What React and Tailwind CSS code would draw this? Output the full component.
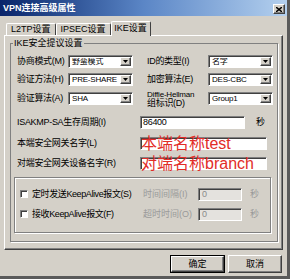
import React from 'react';

const sunken = "bg-white border border-t-[#808080] border-l-[#808080] border-r-white border-b-white shadow-[inset_1px_1px_0_#404040]";
const raised = "bg-[#d4d0c8] border border-t-white border-l-white border-r-[#404040] border-b-[#404040] shadow-[inset_-1px_-1px_0_#808080]";

function Select({ value }) {
  return (
    <div className={`${sunken} w-[65px] h-[13px] flex items-center`}>
      <span className="flex-1 pl-[3px] text-[8px] leading-none text-black whitespace-nowrap overflow-hidden tracking-[-0.2px]">{value}</span>
      <div className={`${raised} w-[11px] h-[9px] mr-[1px] flex items-center justify-center shrink-0`}>
        <svg width="5" height="3" viewBox="0 0 5 3"><path d="M0 0h5L2.5 3z" fill="#000" /></svg>
      </div>
    </div>
  );
}

function Tab({ label, active }) {
  if (active) {
    return (
      <div className="relative z-10 -mb-px h-[15px] w-[40px] bg-[#d4d0c8] border-t border-l border-white border-r border-r-[#404040] rounded-t-[2px] flex items-center justify-center text-[9px] text-black">
        {label}
      </div>
    );
  }
  return (
    <div className="h-[12px] bg-[#d4d0c8] border-t border-l border-white border-r border-r-[#404040] rounded-t-[2px] flex items-center justify-center text-[9px] text-black px-[4px]">
      {label}
    </div>
  );
}

function KeepRow({ label, timeLabel }) {
  return (
    <div className="flex items-center h-[12px]">
      <div className="w-[123px] flex items-center">
        <div className={`${sunken} w-[8px] h-[8px]`} />
        <span className="ml-[4px] text-[9px] leading-none text-black whitespace-nowrap tracking-[-0.4px]">{label}</span>
      </div>
      <span className="w-[55px] text-[9px] leading-none text-[#9a9a9a] whitespace-nowrap">{timeLabel}</span>
      <div className="w-[44px] h-[13px] bg-[#e4e2de] border border-t-[#808080] border-l-[#808080] border-r-white border-b-white shadow-[inset_1px_1px_0_#404040] flex items-center pl-[3px] text-[9px] text-[#8a8a8a] leading-none">0</div>
      <span className="ml-[8px] text-[9px] leading-none text-[#9a9a9a]">秒</span>
    </div>
  );
}

export default function App() {
  return (
    <div className="w-[290px] h-[279px] bg-[#d4d0c8] border-r-[3px] border-b-[3px] border-[#5a5a5a] flex flex-col font-['Liberation_Sans','Noto_Sans_CJK_SC',sans-serif] overflow-hidden">
      {/* title bar */}
      <div className="h-[16px] bg-linear-to-r from-[#0a246a] via-[#5b86c6] to-[#b4d0ee] flex items-center justify-between pl-[3px] pr-[2px]">
        <span className="text-white text-[9px] font-bold leading-none">VPN连接高级属性</span>
        <div className={`${raised} w-[12px] h-[10px] mt-[2px] flex items-center justify-center`}>
          <svg width="6" height="5" viewBox="0 0 6 5"><path d="M0 0L6 5M6 0L0 5" stroke="#000" strokeWidth="1.4" /></svg>
        </div>
      </div>

      {/* tabs */}
      <div className="flex items-end h-[14px] mt-[5px] ml-[6px]">
        <Tab label="L2TP设置" />
        <Tab label="IPSEC设置" />
        <Tab label="IKE设置" active />
      </div>

      {/* tab panel */}
      <div className="ml-[4px] w-[279px] h-[215px] border-t border-l border-white border-r border-b border-r-[#404040] border-b-[#404040] shadow-[inset_-1px_-1px_0_#808080]">
        <fieldset className="mt-[2px] ml-[5px] w-[268px] border border-[#808080] shadow-[1px_1px_0_#fff] pb-[8px]">
          <legend className="ml-[2px] px-[1px] text-[9px] leading-[10px] text-black">IKE安全提议设置</legend>

          <div className="pl-[6px] text-[9px] text-black tracking-[-0.3px]">
            <div className="flex items-center h-[13px] mt-[7px]">
              <span className="w-[51px] leading-none whitespace-nowrap">协商模式(M)</span>
              <Select value="野蛮模式" />
              <span className="w-[61px] ml-[14px] leading-none whitespace-nowrap">ID的类型(I)</span>
              <Select value="名字" />
            </div>
            <div className="flex items-center h-[13px] mt-[5px]">
              <span className="w-[51px] leading-none whitespace-nowrap">验证方法(H)</span>
              <Select value="PRE-SHARE" />
              <span className="w-[61px] ml-[14px] leading-none whitespace-nowrap">加密算法(E)</span>
              <Select value="DES-CBC" />
            </div>
            <div className="flex items-center h-[13px] mt-[6px]">
              <span className="w-[51px] leading-none whitespace-nowrap">验证算法(A)</span>
              <Select value="SHA" />
              <span className="w-[61px] ml-[14px] flex flex-col leading-[9px] whitespace-nowrap">
                <span className="text-[8px] tracking-[-0.2px]">Diffie-Hellman</span>
                <span>组标识(D)</span>
              </span>
              <Select value="Group1" />
            </div>

            <div className="flex items-center h-[13px] mt-[11px]">
              <span className="w-[123px] leading-none whitespace-nowrap">ISAKMP-SA生存周期(I)</span>
              <div className={`${sunken} w-[105px] h-[13px] flex items-center pl-[2px] leading-none`}>86400</div>
              <span className="ml-[11px] leading-none">秒</span>
            </div>
            <div className="flex items-center h-[13px] mt-[8px]">
              <span className="w-[123px] leading-none whitespace-nowrap">本端安全网关名字(L)</span>
              <div className={`${sunken} w-[127px] h-[13px] flex items-center`}>
                <span className="text-[16px] leading-[13px] tracking-normal text-[#e22d28] whitespace-nowrap">本端名称test</span>
              </div>
            </div>
            <div className="flex items-center h-[13px] mt-[7px]">
              <span className="w-[123px] leading-none whitespace-nowrap">对端安全网关设备名字(R)</span>
              <div className={`${sunken} w-[127px] h-[13px] flex items-center`}>
                <span className="text-[16px] leading-[13px] tracking-normal text-[#e22d28] whitespace-nowrap">对端名称branch</span>
              </div>
            </div>
          </div>

          <div className="mt-[7px] ml-[3px] w-[257px] border border-[#808080] shadow-[1px_1px_0_#fff,inset_1px_1px_0_#fff] pt-[10px] pb-[12px] pl-[5px] flex flex-col gap-[8px]">
            <KeepRow label="定时发送KeepAlive报文(S)" timeLabel="时间间隔(I)" />
            <KeepRow label="接收KeepAlive报文(F)" timeLabel="超时时间(O)" />
          </div>
        </fieldset>
      </div>

      {/* buttons */}
      <div className="flex justify-end gap-[3px] mt-[5px] pr-[5px]">
        <div className="w-[55px] h-[18px] border border-black">
          <div className={`${raised} w-full h-full flex items-center justify-center text-[9px] text-black leading-none`}>确定</div>
        </div>
        <div className={`${raised} w-[54px] h-[18px] flex items-center justify-center text-[9px] text-black leading-none`}>取消</div>
      </div>
    </div>
  );
}
